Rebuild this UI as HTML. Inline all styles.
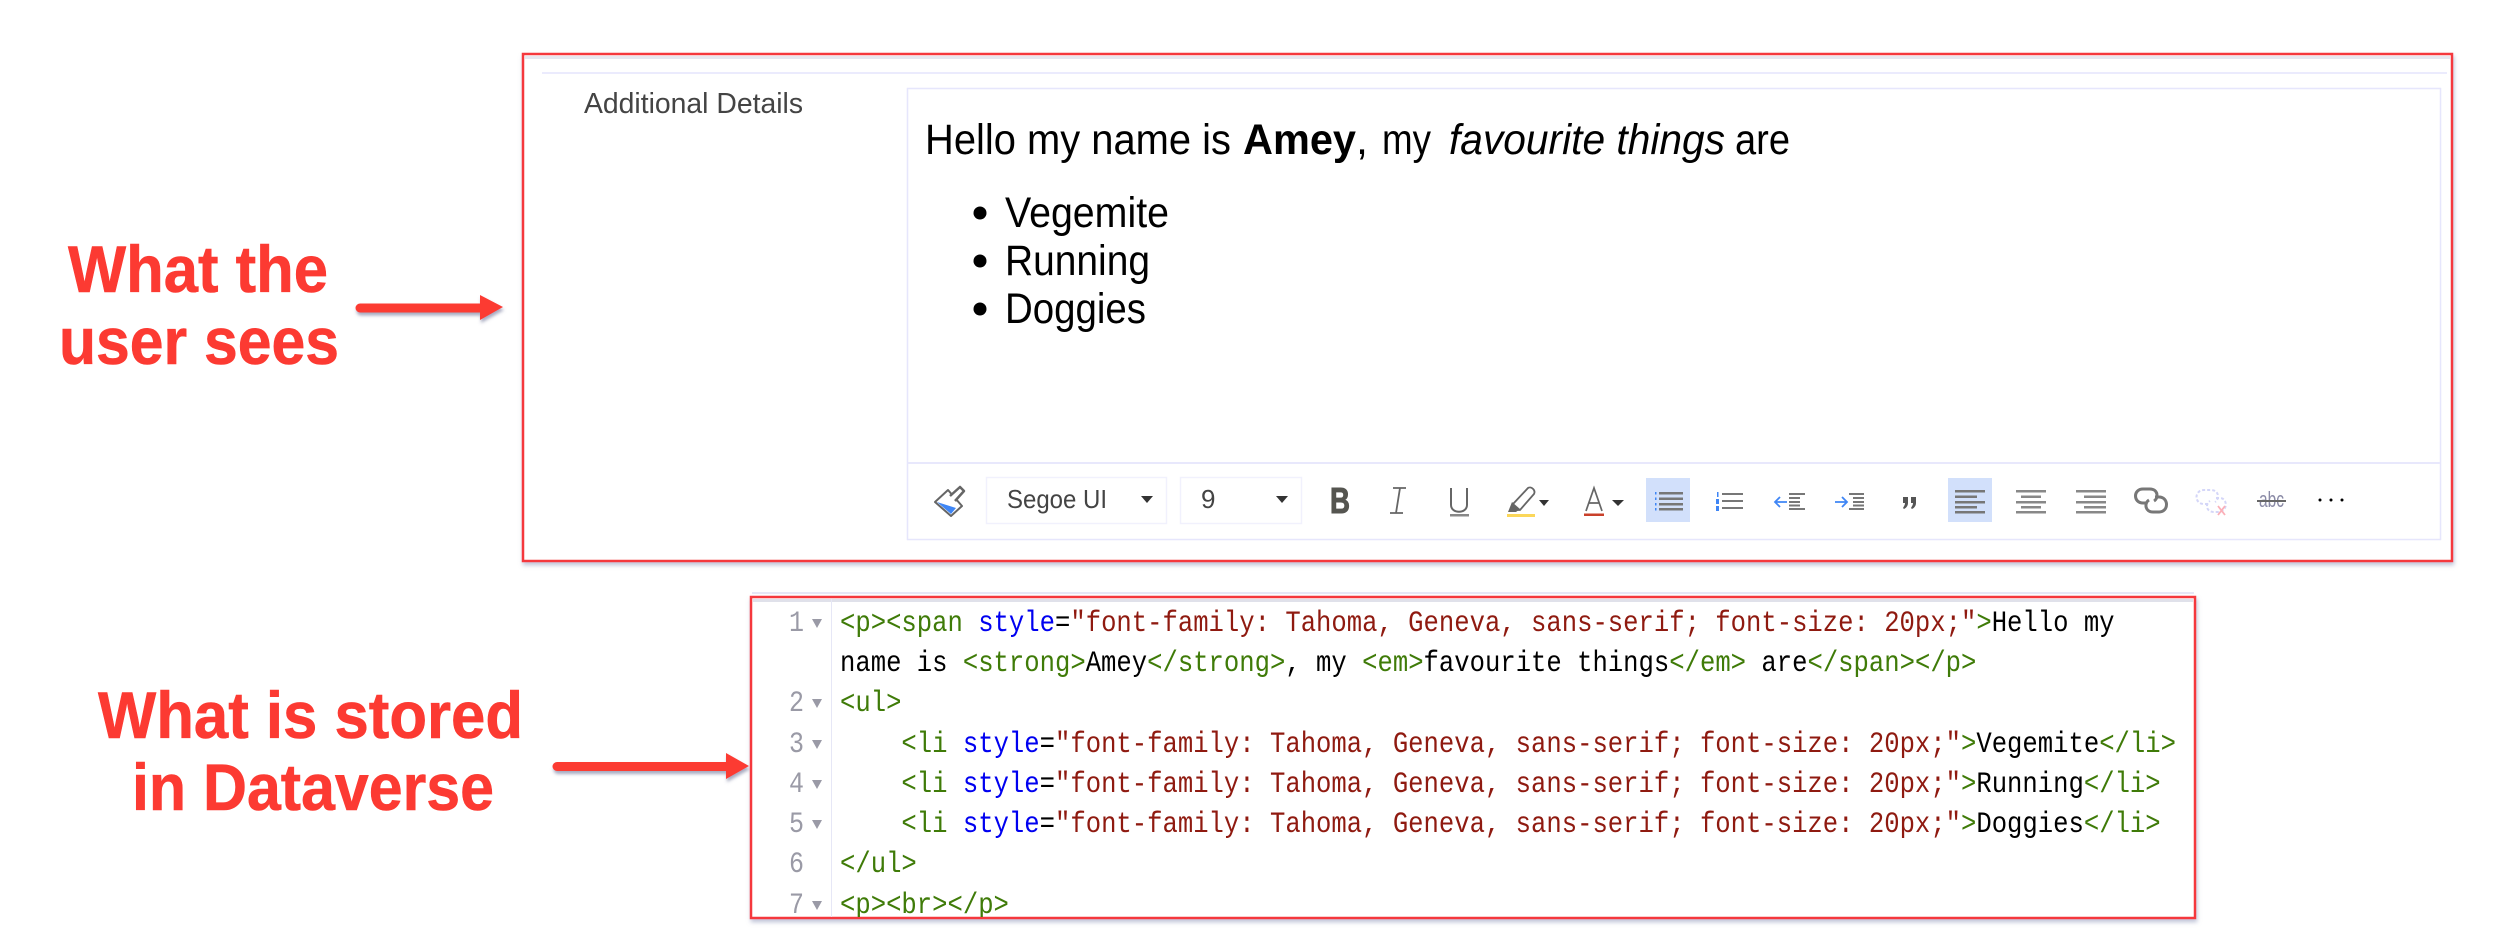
<!DOCTYPE html>
<html lang="en">
<head>
<meta charset="utf-8">
<title>What the user sees vs what is stored in Dataverse</title>
<style>
html,body{margin:0;padding:0;background:#fff;width:2500px;height:946px;overflow:hidden}
svg{display:block;position:absolute;left:0;top:0}
text{white-space:pre}
.h{font:bold 66px "Liberation Sans",sans-serif;fill:#fc3a32;stroke:#fc3a32;stroke-width:.6px}
.t{font-family:"Liberation Sans",sans-serif;fill:#000}
.m{font:30px "Liberation Mono",monospace;fill:#000}
.n{font:30px "Liberation Mono",monospace;fill:#9a9aa6}
.g{fill:#3f7b08}.b{fill:#0000f0}.r{fill:#8f1a10}
</style>
</head>
<body>
<svg width="2500" height="946" viewBox="0 0 2500 946" xmlns="http://www.w3.org/2000/svg">
<defs>
<filter id="s" x="-5%" y="-5%" width="110%" height="115%"><feDropShadow dx="1" dy="3" stdDeviation="2" flood-color="#8088b0" flood-opacity=".5"/></filter>
<filter id="a" x="-10%" y="-30%" width="120%" height="170%"><feDropShadow dx="1" dy="3" stdDeviation="1.500" flood-color="#60648c" flood-opacity=".55"/></filter>
<clipPath id="c"><rect x="752" y="598" width="1442" height="319"/></clipPath>
</defs>

<!-- Headings -->
<text class="h" x="68" y="292" textLength="260" lengthAdjust="spacingAndGlyphs">What the</text>
<text class="h" x="59" y="364" textLength="280" lengthAdjust="spacingAndGlyphs">user sees</text>
<text class="h" x="98" y="738" textLength="425" lengthAdjust="spacingAndGlyphs">What is stored</text>
<text class="h" x="132" y="810" textLength="362" lengthAdjust="spacingAndGlyphs">in Dataverse</text>

<!-- Arrows -->
<path filter="url(#a)" fill="#fc3a32" d="M360 303.500H480V295L503 307L480 320V312.500H360A4.500 4.500 0 0 1 360 303.500Z"/>
<path filter="url(#a)" fill="#fc3a32" d="M557 762H726V753L749 766L726 779V771H557A4.500 4.500 0 0 1 557 762Z"/>

<!-- Top box -->
<rect x="523" y="54" width="1929" height="507" fill="#fff" stroke="#f5393c" stroke-width="2.500" filter="url(#s)"/>
<rect x="525" y="56" width="1925" height="3" fill="#e6e7f0"/>
<rect x="542" y="72" width="1905" height="2" fill="#ebebfd"/>
<text class="t" x="584" y="113" font-size="29" style="fill:#444" textLength="219" lengthAdjust="spacingAndGlyphs">Additional Details</text>

<rect x="907.500" y="88.500" width="1533" height="451" fill="#fff" stroke="#e6e6fc" stroke-width="1.500"/>
<rect x="908" y="462" width="1532" height="2" fill="#e8e8fc"/>

<text class="t" x="925" y="154" font-size="43" textLength="306" lengthAdjust="spacingAndGlyphs">Hello my name is</text>
<text class="t" x="1243" y="154" font-size="43" font-weight="bold" textLength="113" lengthAdjust="spacingAndGlyphs">Amey</text>
<text class="t" x="1356" y="154" font-size="43">,</text>
<text class="t" x="1382" y="154" font-size="43" textLength="49" lengthAdjust="spacingAndGlyphs">my</text>
<text class="t" x="1449" y="154" font-size="43" font-style="italic" textLength="276" lengthAdjust="spacingAndGlyphs">favourite things</text>
<text class="t" x="1735" y="154" font-size="43" textLength="55" lengthAdjust="spacingAndGlyphs">are</text>

<circle cx="980" cy="213" r="6.500"/><circle cx="980" cy="261" r="6.500"/><circle cx="980" cy="309" r="6.500"/>
<text class="t" x="1005" y="227" font-size="43" textLength="164" lengthAdjust="spacingAndGlyphs">Vegemite</text>
<text class="t" x="1005" y="275" font-size="43" textLength="145" lengthAdjust="spacingAndGlyphs">Running</text>
<text class="t" x="1005" y="323" font-size="43" textLength="141" lengthAdjust="spacingAndGlyphs">Doggies</text>

<!-- Toolbar: brush -->
<path d="M935 502L948 490L962 506L951 516Z" fill="#fff" stroke="#666" stroke-width="2" stroke-linejoin="round"/>
<path d="M937 502L956 508L951 514Z" fill="#3f86f5"/>
<path d="M950 491L960 482L964 486L955 496" transform="translate(0,5)" fill="#fff" stroke="#666" stroke-width="2.500" stroke-linejoin="round"/>

<!-- Selects -->
<rect x="986.500" y="477.500" width="180" height="46" fill="#fff" stroke="#f1f1fd" stroke-width="1.500"/>
<text class="t" x="1007" y="508" font-size="26" style="fill:#444" textLength="100" lengthAdjust="spacingAndGlyphs">Segoe UI</text>
<path d="M1141 496H1153L1147 503Z" fill="#333"/>
<rect x="1180.500" y="477.500" width="121" height="46" fill="#fff" stroke="#f1f1fd" stroke-width="1.500"/>
<text class="t" x="1201" y="508" font-size="26" style="fill:#444">9</text>
<path d="M1276 496H1288L1282 503Z" fill="#333"/>

<!-- B I U -->
<text class="t" x="1330" y="513" font-size="36" font-weight="bold" style="fill:#555550;stroke:#555550;stroke-width:1px" textLength="20" lengthAdjust="spacingAndGlyphs">B</text>
<path d="M1393 488H1406M1390 513H1403M1400 488L1396 513" fill="none" stroke="#666" stroke-width="1.800"/>
<path d="M1451 488V505C1451 514 1467 514 1467 505V488" fill="none" stroke="#666" stroke-width="2"/>
<rect x="1450" y="514" width="19" height="2.500" fill="#888"/>

<!-- Highlighter -->
<path d="M1513 504L1528 488C1531 486 1536 490 1534 494L1520 510L1513 510Z" fill="#fff" stroke="#666" stroke-width="1.800"/>
<path d="M1508 512L1512 502L1520 509L1516 512Z" fill="#666"/>
<rect x="1507" y="514" width="28" height="3" fill="#fbd75a"/>
<path d="M1539 500H1549L1544 506Z" fill="#333"/>

<!-- Font color -->
<path d="M1586 511L1594 488L1602 511M1589 503H1599" fill="none" stroke="#666" stroke-width="1.700"/>
<rect x="1584" y="513.500" width="20" height="2.500" fill="#c9402a"/>
<path d="M1612 500H1624L1618 506Z" fill="#333"/>

<!-- Active backgrounds -->
<rect x="1646" y="478" width="44" height="44" fill="#d2e0fb"/>
<rect x="1948" y="478" width="44" height="44" fill="#d2e0fb"/>

<!-- Bullet list -->
<g fill="#777">
<rect x="1659" y="492" width="24" height="2.500"/><rect x="1659" y="497.500" width="24" height="2.500"/><rect x="1659" y="503" width="24" height="2.500"/><rect x="1659" y="508" width="24" height="2.500"/>
</g>
<g fill="#3f86f5"><rect x="1655" y="492" width="1.500" height="2.500"/><rect x="1655" y="497.500" width="1.500" height="2.500"/><rect x="1655" y="503" width="1.500" height="2.500"/><rect x="1655" y="508" width="1.500" height="2.500"/></g>

<!-- Numbered list -->
<g fill="#777"><rect x="1722" y="493" width="21" height="2"/><rect x="1722" y="500" width="21" height="2"/><rect x="1722" y="507" width="21" height="2"/></g>
<g fill="#3f86f5"><rect x="1717" y="492" width="1.500" height="5"/><rect x="1716" y="499" width="3" height="5"/><rect x="1716" y="506" width="3" height="5"/></g>

<!-- Outdent -->
<path d="M1787 502H1775M1780 497L1775 502L1780 507" fill="none" stroke="#3f86f5" stroke-width="1.800"/>
<g fill="#777"><rect x="1789" y="493" width="16" height="2"/><rect x="1789" y="497" width="11" height="2"/><rect x="1789" y="501" width="11" height="2"/><rect x="1789" y="504.500" width="11" height="2"/><rect x="1789" y="508" width="16" height="2"/></g>

<!-- Indent -->
<path d="M1835 502H1847M1842 497L1847 502L1842 507" fill="none" stroke="#3f86f5" stroke-width="1.800"/>
<g fill="#777"><rect x="1849" y="493" width="15" height="2"/><rect x="1853" y="497" width="11" height="2"/><rect x="1853" y="501" width="11" height="2"/><rect x="1853" y="504.500" width="11" height="2"/><rect x="1849" y="508" width="15" height="2"/></g>

<!-- Quote -->
<path d="M1903 497H1908V503C1908 506 1906 508 1904 509L1903 508C1904 506 1905 505 1905 503H1903ZM1911 497H1916V503C1916 506 1914 508 1912 509L1911 508C1912 506 1913 505 1913 503H1911Z" fill="#555"/>

<!-- Align left -->
<g fill="#777"><rect x="1955" y="490" width="30" height="2.500"/><rect x="1955" y="495.500" width="22" height="2.500"/><rect x="1955" y="501" width="30" height="2.500"/><rect x="1955" y="506" width="22" height="2.500"/><rect x="1955" y="511" width="30" height="2.500"/></g>
<!-- Align center -->
<g fill="#888"><rect x="2016" y="490" width="30" height="2.500"/><rect x="2021" y="495.500" width="20" height="2.500"/><rect x="2016" y="501" width="30" height="2.500"/><rect x="2021" y="506" width="20" height="2.500"/><rect x="2016" y="511" width="30" height="2.500"/></g>
<!-- Align right -->
<g fill="#888"><rect x="2076" y="490" width="30" height="2.500"/><rect x="2084" y="495.500" width="22" height="2.500"/><rect x="2076" y="501" width="30" height="2.500"/><rect x="2084" y="506" width="22" height="2.500"/><rect x="2076" y="511" width="30" height="2.500"/></g>

<!-- Link -->
<g fill="none" stroke="#777" stroke-width="3">
<path d="M2147 503H2143C2133 503 2133 489 2143 489H2150C2158 489 2159 498 2154 501"/>
<path d="M2155 497H2159C2169 497 2169 512 2159 512H2153C2145 512 2144 503 2149 500"/>
</g>
<!-- Unlink -->
<g fill="none" stroke="#d4d6f8" stroke-width="2" stroke-dasharray="3 2">
<path d="M2208 504H2204C2194 504 2194 490 2204 490H2211C2219 490 2220 499 2215 502"/>
<path d="M2216 498H2220C2228 498 2228 512 2218 512H2214C2206 512 2205 504 2210 501"/>
</g>
<path d="M2218 506L2225 515M2225 506L2218 515" stroke="#fbb0b8" stroke-width="1.800" fill="none"/>
<!-- abc -->
<text class="t" x="2259" y="507" font-size="22" style="fill:#8a8aa6" textLength="25" lengthAdjust="spacingAndGlyphs">abc</text>
<rect x="2257" y="500" width="29" height="2" fill="#666"/>
<!-- more -->
<circle cx="2320" cy="500" r="1.500"/><circle cx="2331" cy="500" r="1.500"/><circle cx="2342" cy="500" r="1.500"/>

<!-- Bottom box -->
<rect x="752" y="592" width="1442" height="2" fill="#e6e7f6"/>
<rect x="751" y="597" width="1444" height="321" fill="#fff" stroke="#f5393c" stroke-width="2.500" filter="url(#s)"/>
<rect x="753" y="599" width="1440" height="3" fill="#e0e1ea"/>
<rect x="831" y="599" width="1" height="318" fill="#e6e7f6"/>

<g clip-path="url(#c)">
<g class="nums">
<text class="n" x="789" y="631" textLength="15" lengthAdjust="spacingAndGlyphs">1</text>
<text class="n" x="789" y="711" textLength="15" lengthAdjust="spacingAndGlyphs">2</text>
<text class="n" x="789" y="752" textLength="15" lengthAdjust="spacingAndGlyphs">3</text>
<text class="n" x="789" y="792" textLength="15" lengthAdjust="spacingAndGlyphs">4</text>
<text class="n" x="789" y="832" textLength="15" lengthAdjust="spacingAndGlyphs">5</text>
<text class="n" x="789" y="872" textLength="15" lengthAdjust="spacingAndGlyphs">6</text>
<text class="n" x="789" y="913" textLength="15" lengthAdjust="spacingAndGlyphs">7</text>
</g>
<g fill="#9a9aa6">
<path d="M812 619H822L817 628Z"/><path d="M812 699H822L817 708Z"/><path d="M812 740H822L817 749Z"/><path d="M812 780H822L817 789Z"/><path d="M812 820H822L817 829Z"/><path d="M812 901H822L817 910Z"/>
</g>

<g transform="translate(840,0) scale(.8533,1)">
<text class="m" x="0" y="631"><tspan class="g">&lt;p&gt;&lt;span</tspan> <tspan class="b">style</tspan>=<tspan class="r">"font-family: Tahoma, Geneva, sans-serif; font-size: 20px;"</tspan><tspan class="g">&gt;</tspan>Hello my</text>
<text class="m" x="0" y="671">name is <tspan class="g">&lt;strong&gt;</tspan>Amey<tspan class="g">&lt;/strong&gt;</tspan>, my <tspan class="g">&lt;em&gt;</tspan>favourite things<tspan class="g">&lt;/em&gt;</tspan> are<tspan class="g">&lt;/span&gt;&lt;/p&gt;</tspan></text>
<text class="m" x="0" y="711"><tspan class="g">&lt;ul&gt;</tspan></text>
<text class="m" x="0" y="752">    <tspan class="g">&lt;li</tspan> <tspan class="b">style</tspan>=<tspan class="r">"font-family: Tahoma, Geneva, sans-serif; font-size: 20px;"</tspan><tspan class="g">&gt;</tspan>Vegemite<tspan class="g">&lt;/li&gt;</tspan></text>
<text class="m" x="0" y="792">    <tspan class="g">&lt;li</tspan> <tspan class="b">style</tspan>=<tspan class="r">"font-family: Tahoma, Geneva, sans-serif; font-size: 20px;"</tspan><tspan class="g">&gt;</tspan>Running<tspan class="g">&lt;/li&gt;</tspan></text>
<text class="m" x="0" y="832">    <tspan class="g">&lt;li</tspan> <tspan class="b">style</tspan>=<tspan class="r">"font-family: Tahoma, Geneva, sans-serif; font-size: 20px;"</tspan><tspan class="g">&gt;</tspan>Doggies<tspan class="g">&lt;/li&gt;</tspan></text>
<text class="m" x="0" y="872"><tspan class="g">&lt;/ul&gt;</tspan></text>
<text class="m" x="0" y="913"><tspan class="g">&lt;p&gt;&lt;br&gt;&lt;/p&gt;</tspan></text>
</g>
</g>
</svg>
</body>
</html>
